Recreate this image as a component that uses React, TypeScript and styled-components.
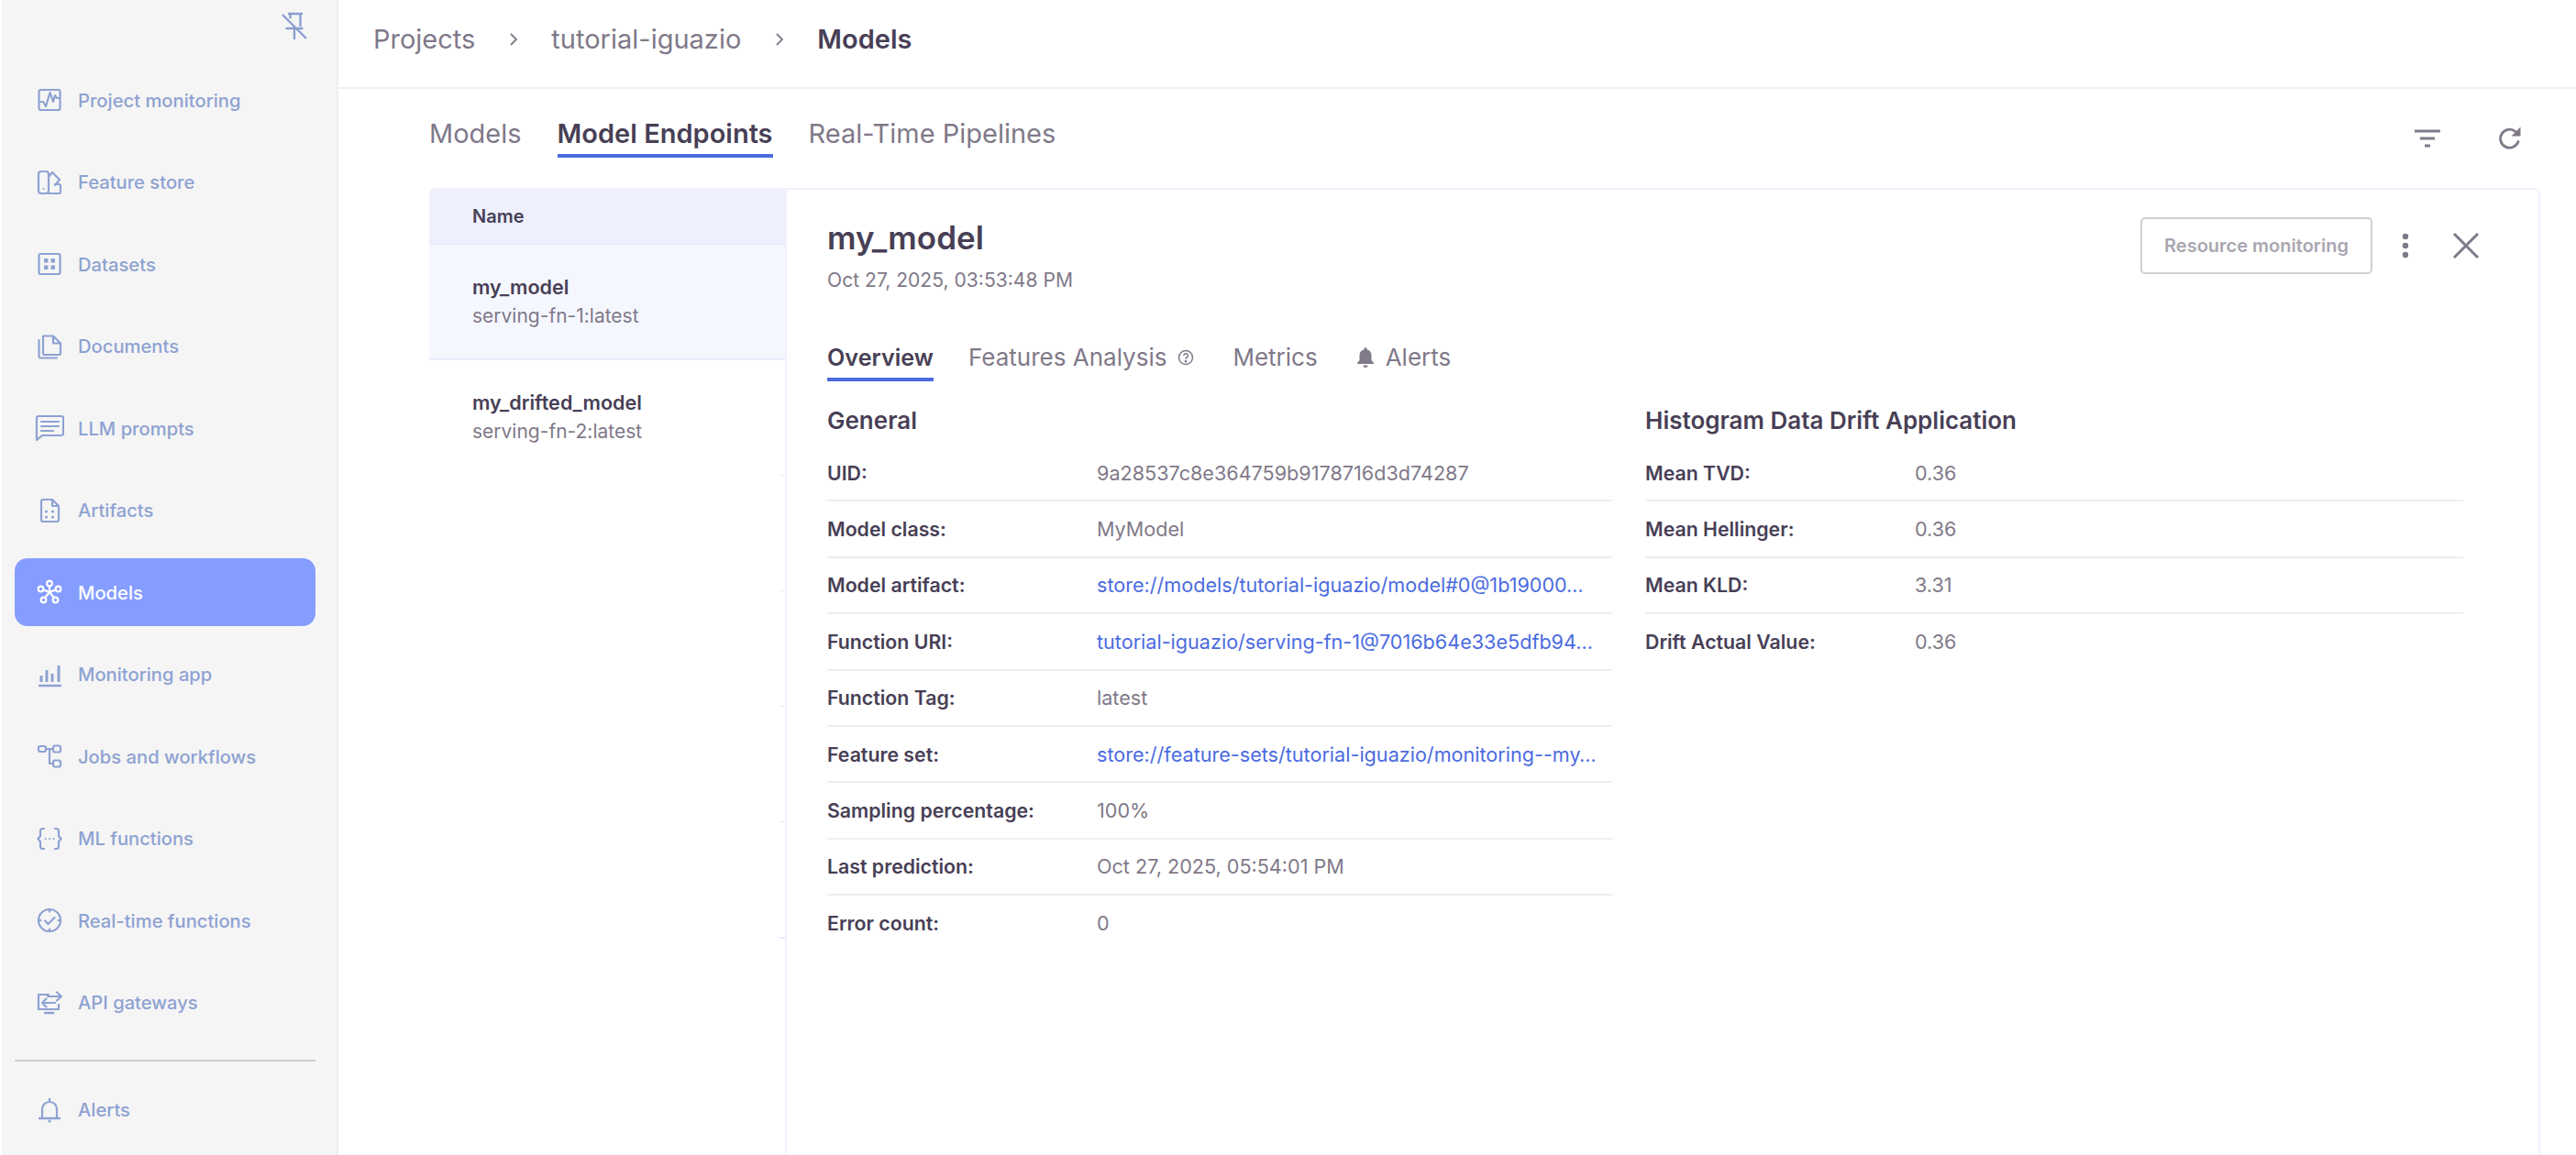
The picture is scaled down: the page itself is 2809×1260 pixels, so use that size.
import React from "react";
import styled, { createGlobalStyle } from "styled-components";

const GlobalStyle = createGlobalStyle`
  html, body {
    margin: 0;
    padding: 0;
    background: #fff;
    font-family: Inter, "Noto Sans", sans-serif;
  }
  * {
    box-sizing: border-box;
  }
`;

const Svg: React.FC<{ w?: number; h?: number; vb?: string; children: React.ReactNode }> = ({
  w = 28,
  h = 28,
  vb = "0 0 28 28",
  children
}) => (
  <svg
    width={w}
    height={h}
    viewBox={vb}
    fill="none"
    stroke="currentColor"
    strokeWidth="2.2"
    strokeLinecap="round"
    strokeLinejoin="round"
  >
    {children}
  </svg>
);

const Dot = ({ x, y, r = 1.6 }: { x: number; y: number; r?: number }) => (
  <circle cx={x} cy={y} r={r} fill="currentColor" stroke="none" />
);

const navIcons: Record<string, React.ReactNode> = {
  monitoring: (
    <Svg>
      <rect x="2.500" y="3" width="23" height="22" rx="2" />
      <path d="M3 16h4l3 5 4.500-15 3.500 10 2-7 2 3H25" />
    </Svg>
  ),
  feature: (
    <Svg>
      <rect x="2" y="2" width="11" height="24" rx="3" />
      <path d="M13 8l4-5 8 8-5 6M13 26h11a2 2 0 0 0 2-2v-6a2 2 0 0 0-2-2h-4" />
      <Dot x={7.500} y={21} r={1} />
    </Svg>
  ),
  datasets: (
    <Svg>
      <rect x="2.500" y="3" width="23" height="22" rx="2" />
      <rect x="8" y="8" width="4.500" height="4.500" fill="currentColor" stroke="none" />
      <rect x="15.500" y="8" width="4.500" height="4.500" fill="currentColor" stroke="none" />
      <rect x="8" y="15.500" width="4.500" height="4.500" fill="currentColor" stroke="none" />
      <rect x="15.500" y="15.500" width="4.500" height="4.500" fill="currentColor" stroke="none" />
    </Svg>
  ),
  documents: (
    <Svg>
      <path d="M7 22V2.500h11l8 8V22a1 1 0 0 1-1 1H8a1 1 0 0 1-1-1zM18 2.500v8h8" />
      <path d="M2.500 7v18a1.500 1.500 0 0 0 1.500 1.500h18" />
    </Svg>
  ),
  prompts: (
    <Svg w={32} h={30} vb="0 0 32 30">
      <path d="M2 4a2 2 0 0 1 2-2h25a2 2 0 0 1 2 2v17a2 2 0 0 1-2 2H8l-6 5z" />
      <path d="M7 8h19M7 13h19M7 18h13" />
    </Svg>
  ),
  artifacts: (
    <Svg>
      <path d="M5 4a2 2 0 0 1 2-2h10l7 7v15a2 2 0 0 1-2 2H7a2 2 0 0 1-2-2zM17 2v7h7" />
      <Dot x={10.500} y={15} />
      <Dot x={17.500} y={15} />
      <Dot x={10.500} y={21} />
      <Dot x={17.500} y={21} />
    </Svg>
  ),
  models: (
    <Svg>
      <circle cx="14" cy="4.500" r="2.800" />
      <circle cx="4.500" cy="10.500" r="2.800" />
      <circle cx="23.500" cy="10.500" r="2.800" />
      <circle cx="7.500" cy="22.500" r="2.800" />
      <circle cx="20.500" cy="22.500" r="2.800" />
      <path d="M14 7.500V14M7.500 11.500L14 14M20.500 11.500L14 14M9 20l5-6M19 20l-5-6" />
    </Svg>
  ),
  app: (
    <Svg>
      <path d="M3 26h23" strokeWidth="2.400" />
      <path d="M5 22v-7M11 22V9M17 22v-9M24 22V4" strokeWidth="3" strokeLinecap="butt" />
    </Svg>
  ),
  jobs: (
    <Svg>
      <rect x="2" y="3" width="8" height="6" rx="2" />
      <rect x="18" y="2.500" width="8" height="7" rx="2" />
      <rect x="18" y="18.500" width="8" height="7" rx="2" />
      <path d="M10 6h8M14 6v16h4" />
    </Svg>
  ),
  functions: (
    <Svg>
      <path d="M8 3H6.500A2.500 2.500 0 0 0 4 5.500V11l-2.500 3L4 17v5.500A2.500 2.500 0 0 0 6.500 25H8" />
      <path d="M20 3h1.500A2.500 2.500 0 0 1 24 5.500V11l2.500 3L24 17v5.500a2.500 2.500 0 0 1-2.500 2.500H20" />
      <Dot x={9.500} y={14} r={1.100} />
      <Dot x={14} y={14} r={1.100} />
      <Dot x={18.500} y={14} r={1.100} />
    </Svg>
  ),
  realtime: (
    <Svg>
      <circle cx="14" cy="14" r="12" />
      <path d="M9 14.500l3.500 3.500L19.500 11M14 2v2.500M14 23.500V26M2 14h2.500M23.500 14H26" />
    </Svg>
  ),
  gateways: (
    <Svg w={30} h={28} vb="0 0 30 28">
      <path d="M14 5H3v16h22v-5" />
      <path d="M10 25h9" strokeWidth="2.600" />
      <path d="M13 7h15M23 2.500L28 7l-5 4.500" />
      <path d="M21 14H7M11.500 9.500L7 14l4.500 4.500" />
    </Svg>
  ),
  alerts: (
    <Svg>
      <path d="M6 22V13a8 8 0 0 1 16 0v9" />
      <path d="M3 23h22" strokeWidth="2.400" />
      <path d="M14 3V2" strokeWidth="2.400" />
      <Dot x={14} y={26} r={1.500} />
    </Svg>
  )
};

const navItems = [
  { key: "monitoring", label: "Project monitoring" },
  { key: "feature", label: "Feature store" },
  { key: "datasets", label: "Datasets" },
  { key: "documents", label: "Documents" },
  { key: "prompts", label: "LLM prompts" },
  { key: "artifacts", label: "Artifacts" },
  { key: "models", label: "Models", active: true },
  { key: "app", label: "Monitoring app" },
  { key: "jobs", label: "Jobs and workflows" },
  { key: "functions", label: "ML functions" },
  { key: "realtime", label: "Real-time functions" },
  { key: "gateways", label: "API gateways" }
];

const generalRows = [
  { label: "UID:", value: "9a28537c8e364759b9178716d3d74287" },
  { label: "Model class:", value: "MyModel" },
  { label: "Model artifact:", value: "store://models/tutorial-iguazio/model#0@1b19000…", link: true },
  { label: "Function URI:", value: "tutorial-iguazio/serving-fn-1@7016b64e33e5dfb94…", link: true },
  { label: "Function Tag:", value: "latest" },
  { label: "Feature set:", value: "store://feature-sets/tutorial-iguazio/monitoring--my…", link: true },
  { label: "Sampling percentage:", value: "100%" },
  { label: "Last prediction:", value: "Oct 27, 2025, 05:54:01 PM" },
  { label: "Error count:", value: "0" }
];

const driftRows = [
  { label: "Mean TVD:", value: "0.36" },
  { label: "Mean Hellinger:", value: "0.36" },
  { label: "Mean KLD:", value: "3.31" },
  { label: "Drift Actual Value:", value: "0.36" }
];

const App: React.FC = () => {
  return (
    <Page>
      <GlobalStyle />
      <Sidebar>
        <PinRow>
          <svg width="28" height="32" viewBox="0 0 28 32" fill="none" stroke="currentColor" strokeWidth="2.400">
            <path d="M7 2h16M9.500 2v5M20.500 2v14M4.500 18h19M14 18v12M1 3l26 26" />
          </svg>
        </PinRow>
        <NavList>
          {navItems.map(item => (
            <NavItem key={item.key} $active={item.active}>
              <NavIcon>{navIcons[item.key]}</NavIcon>
              {item.label}
            </NavItem>
          ))}
        </NavList>
        <NavDivider />
        <NavItem>
          <NavIcon>{navIcons.alerts}</NavIcon>
          Alerts
        </NavItem>
      </Sidebar>
      <Main>
        <Header>
          <Crumb>Projects</Crumb>
          <CrumbArrow>
            <svg width="12" height="18" viewBox="0 0 12 18" fill="none" stroke="currentColor" strokeWidth="1.800">
              <path d="M3 3l6 6-6 6" />
            </svg>
          </CrumbArrow>
          <Crumb>tutorial-iguazio</Crumb>
          <CrumbArrow>
            <svg width="12" height="18" viewBox="0 0 12 18" fill="none" stroke="currentColor" strokeWidth="1.800">
              <path d="M3 3l6 6-6 6" />
            </svg>
          </CrumbArrow>
          <Crumb $current>Models</Crumb>
        </Header>
        <Content>
          <TabBar>
            <ContentTab>Models</ContentTab>
            <ContentTab $active>Model Endpoints</ContentTab>
            <ContentTab>Real-Time Pipelines</ContentTab>
            <TabBarActions>
              <ToolIcon>
                <svg width="30" height="24" viewBox="0 0 30 24" fill="none" stroke="currentColor" strokeWidth="3">
                  <path d="M1 4h28M7 12h16M12 20h6" />
                </svg>
              </ToolIcon>
              <ToolIcon>
                <svg width="28" height="28" viewBox="0 0 28 28" fill="none" stroke="currentColor" strokeWidth="2.800">
                  <path d="M23 17.500A10 10 0 1 1 20 6.500" strokeLinecap="round" />
                  <path d="M25.500 1.500V11.500H15.500z" fill="currentColor" stroke="none" />
                </svg>
              </ToolIcon>
            </TabBarActions>
          </TabBar>
          <TableCard>
            <ListPane>
              <ListHeader>Name</ListHeader>
              <ListRow $selected>
                <RowName>my_model</RowName>
                <RowSub>serving-fn-1:latest</RowSub>
              </ListRow>
              <ListRow>
                <RowName>my_drifted_model</RowName>
                <RowSub>serving-fn-2:latest</RowSub>
              </ListRow>
              <ListRow />
              <ListRow />
              <ListRow />
              <ListRow />
            </ListPane>
            <DetailPane>
              <DetailHead>
                <div>
                  <DetailTitle>my_model</DetailTitle>
                  <DetailDate>Oct 27, 2025, 03:53:48 PM</DetailDate>
                </div>
                <DetailActions>
                  <OutlineButton>Resource monitoring</OutlineButton>
                  <Kebab>
                    <svg width="8" height="30" viewBox="0 0 8 30" fill="currentColor">
                      <circle cx="4" cy="5" r="3.200" />
                      <circle cx="4" cy="15" r="3.200" />
                      <circle cx="4" cy="25" r="3.200" />
                    </svg>
                  </Kebab>
                  <CloseIcon>
                    <svg width="30" height="30" viewBox="0 0 30 30" fill="none" stroke="currentColor" strokeWidth="3">
                      <path d="M2 2l26 26M28 2L2 28" />
                    </svg>
                  </CloseIcon>
                </DetailActions>
              </DetailHead>
              <DetailTabs>
                <DetailTab $active>Overview</DetailTab>
                <DetailTab>
                  Features Analysis
                  <TabGlyph>
                    <svg width="18" height="18" viewBox="0 0 18 18" fill="none" stroke="currentColor" strokeWidth="1.500">
                      <circle cx="9" cy="9" r="7.500" />
                      <path d="M6.800 7a2.300 2.300 0 1 1 3.400 2c-.8.5-1.200.9-1.200 1.800" />
                      <circle cx="9" cy="13.200" r=".6" fill="currentColor" />
                    </svg>
                  </TabGlyph>
                </DetailTab>
                <DetailTab>Metrics</DetailTab>
                <DetailTab>
                  <BellGlyph>
                    <svg width="20" height="24" viewBox="0 0 20 24" fill="currentColor">
                      <path d="M10 1a1.500 1.500 0 0 1 1.500 1.500v.7C15 4 16.500 7 16.500 10v5l2.500 3v1H1v-1l2.500-3v-5c0-3 1.500-6 5-6.800v-.7A1.500 1.500 0 0 1 10 1zM7.500 20.500h5a2.500 2.500 0 0 1-5 0z" />
                    </svg>
                  </BellGlyph>
                  Alerts
                </DetailTab>
              </DetailTabs>
              <Columns>
                <section>
                  <SectionTitle>General</SectionTitle>
                  {generalRows.map((row, i) => (
                    <InfoRow key={row.label} $last={i === generalRows.length - 1}>
                      <InfoLabel>{row.label}</InfoLabel>
                      <InfoValue $link={row.link}>{row.value}</InfoValue>
                    </InfoRow>
                  ))}
                </section>
                <section>
                  <SectionTitle>Histogram Data Drift Application</SectionTitle>
                  {driftRows.map((row, i) => (
                    <InfoRow key={row.label} $last={i === driftRows.length - 1}>
                      <InfoLabel>{row.label}</InfoLabel>
                      <InfoValue>{row.value}</InfoValue>
                    </InfoRow>
                  ))}
                </section>
              </Columns>
            </DetailPane>
          </TableCard>
        </Content>
      </Main>
    </Page>
  );
};

const Page = styled.div`
  display: flex;
  width: 2809px;
  height: 1260px;
  overflow: hidden;
  background: #fff;
  padding-left: 2px;
`;

const Sidebar = styled.aside`
  flex: 0 0 367px;
  display: flex;
  flex-direction: column;
  background: #f5f5f5;
  border-right: 2px solid #eeeeee;
  padding: 0 23px 0 14px;
`;

const PinRow = styled.div`
  flex: 0 0 72px;
  display: flex;
  justify-content: flex-end;
  padding: 13px 9px 0 0;
  color: #8b9fd0;
`;

const NavList = styled.nav`
  display: flex;
  flex-direction: column;
  gap: 15.5px;
`;

const NavItem = styled.div<{ $active?: boolean }>`
  flex: 0 0 74px;
  display: flex;
  align-items: center;
  height: 74px;
  padding-left: 22px;
  border-radius: 14px;
  background: ${p => (p.$active ? "#859dff" : "transparent")};
  color: ${p => (p.$active ? "#ffffff" : "#8ea2d2")};
  font-size: 20.2px;
  font-weight: 500;
  white-space: nowrap;
`;

const NavIcon = styled.span`
  flex: 0 0 32px;
  display: flex;
  justify-content: center;
  margin-right: 15px;
`;

const NavDivider = styled.div`
  height: 2px;
  margin: 25px 0 16px;
  background: #cfcfcf;
`;

const Main = styled.main`
  flex: 1;
  display: flex;
  flex-direction: column;
  min-width: 0;
`;

const Header = styled.header`
  flex: 0 0 97px;
  display: flex;
  align-items: center;
  padding: 0 0 10px 38px;
  border-bottom: 2px solid #f0f0f0;
`;

const Crumb = styled.span<{ $current?: boolean }>`
  font-size: 29px;
  font-weight: ${p => (p.$current ? 600 : 400)};
  color: ${p => (p.$current ? "#483f56" : "#7f7989")};
`;

const CrumbArrow = styled.span`
  display: flex;
  margin: 0 35.5px;
  color: #7f7989;
`;

const Content = styled.div`
  flex: 1;
  display: flex;
  flex-direction: column;
  min-height: 0;
  padding: 0 39px 0 99px;
`;

const TabBar = styled.div`
  flex: 0 0 108px;
  display: flex;
  align-items: flex-start;
  gap: 39px;
  padding-top: 29px;
`;

const ContentTab = styled.div<{ $active?: boolean }>`
  height: 46px;
  font-size: 29px;
  line-height: 40px;
  font-weight: ${p => (p.$active ? 600 : 400)};
  color: ${p => (p.$active ? "#483f56" : "#7f7989")};
  border-bottom: 4px solid ${p => (p.$active ? "#4b6bdf" : "transparent")};
  white-space: nowrap;
`;

const TabBarActions = styled.div`
  margin-left: auto;
  display: flex;
  align-items: center;
  gap: 61px;
  padding: 11px 19px 0 0;
`;

const ToolIcon = styled.span`
  display: flex;
  color: #7f7989;
`;

const TableCard = styled.div`
  flex: 1;
  display: flex;
  min-height: 0;
  border-top: 2px solid #f0f2fd;
  border-right: 2px solid #f0f2fd;
  border-top-left-radius: 6px;
  border-top-right-radius: 6px;
  overflow: hidden;
`;

const ListPane = styled.div`
  flex: 0 0 388px;
  overflow: hidden;
`;

const ListHeader = styled.div`
  height: 60px;
  display: flex;
  align-items: center;
  padding-left: 47px;
  background: #eef1fd;
  border-bottom: 2px solid #e8ecfc;
  font-size: 20px;
  font-weight: 600;
  color: #483f56;
`;

const ListRow = styled.div<{ $selected?: boolean }>`
  position: relative;
  height: 126px;
  display: flex;
  flex-direction: column;
  justify-content: center;
  gap: 6px;
  padding: 0 0 0 47px;
  background: ${p => (p.$selected ? "#f5f7ff" : "#fff")};
  border-bottom: 2px solid ${p => (p.$selected ? "#e8ecfc" : "transparent")};

  &::after {
    content: "";
    position: absolute;
    right: 0;
    bottom: -3px;
    width: 6px;
    height: 2px;
    background: #e8ecfc;
  }
`;

const RowName = styled.div`
  font-size: 21.6px;
  line-height: 25px;
  font-weight: 600;
  color: #483f56;
`;

const RowSub = styled.div`
  font-size: 21px;
  line-height: 25px;
  color: #7f7989;
`;

const DetailPane = styled.div`
  flex: 1;
  min-width: 0;
  border-left: 2px solid #f0f2fd;
  padding: 30px 0 0 44px;
`;

const DetailHead = styled.div`
  display: flex;
  justify-content: space-between;
  align-items: flex-start;
  height: 135px;
`;

const DetailTitle = styled.h1`
  margin: 0;
  font-size: 35px;
  line-height: 44px;
  font-weight: 600;
  color: #483f56;
`;

const DetailDate = styled.div`
  margin-top: 12px;
  font-size: 21.1px;
  line-height: 26px;
  color: #7f7989;
`;

const DetailActions = styled.div`
  display: flex;
  align-items: center;
  padding: 0 64px 0 0;
`;

const OutlineButton = styled.button`
  width: 253px;
  height: 62px;
  padding: 0;
  background: #fff;
  border: 2px solid #d0d0d0;
  border-radius: 5px;
  font-family: Inter, sans-serif;
  font-size: 20px;
  font-weight: 600;
  color: #a9a6b0;
`;

const Kebab = styled.span`
  display: flex;
  margin: 0 47.5px 0 31.5px;
  color: #7f7989;
`;

const CloseIcon = styled.span`
  display: flex;
  color: #7f7989;
`;

const DetailTabs = styled.div`
  display: flex;
  align-items: flex-start;
  gap: 38px;
`;

const DetailTab = styled.div<{ $active?: boolean }>`
  display: flex;
  align-items: center;
  height: 44px;
  padding-bottom: 5px;
  font-size: ${p => (p.$active ? "25.2px" : "26px")};
  font-weight: ${p => (p.$active ? 600 : 400)};
  color: ${p => (p.$active ? "#483f56" : "#7f7989")};
  border-bottom: 4px solid ${p => (p.$active ? "#4b6bdf" : "transparent")};
  white-space: nowrap;
`;

const TabGlyph = styled.span`
  display: flex;
  margin: 0 4px 0 12px;
`;

const BellGlyph = styled.span`
  display: flex;
  margin: 0 12px 0 4px;
`;

const Columns = styled.div`
  display: grid;
  grid-template-columns: 856px 892px;
  column-gap: 36px;
`;

const SectionTitle = styled.h2`
  margin: 27px 0 11px;
  font-size: 26px;
  line-height: 32px;
  font-weight: 600;
  color: #483f56;
`;

const InfoRow = styled.div<{ $last?: boolean }>`
  display: flex;
  align-items: center;
  height: 61.4px;
  border-bottom: 2px solid ${p => (p.$last ? "transparent" : "#eeeeee")};
`;

const InfoLabel = styled.div`
  flex: 0 0 294px;
  font-size: 21.3px;
  font-weight: 600;
  color: #483f56;
`;

const InfoValue = styled.div<{ $link?: boolean }>`
  white-space: nowrap;
  font-size: 21.6px;
  color: ${p => (p.$link ? "#4b6bdf" : "#7f7989")};
`;

export default App;
